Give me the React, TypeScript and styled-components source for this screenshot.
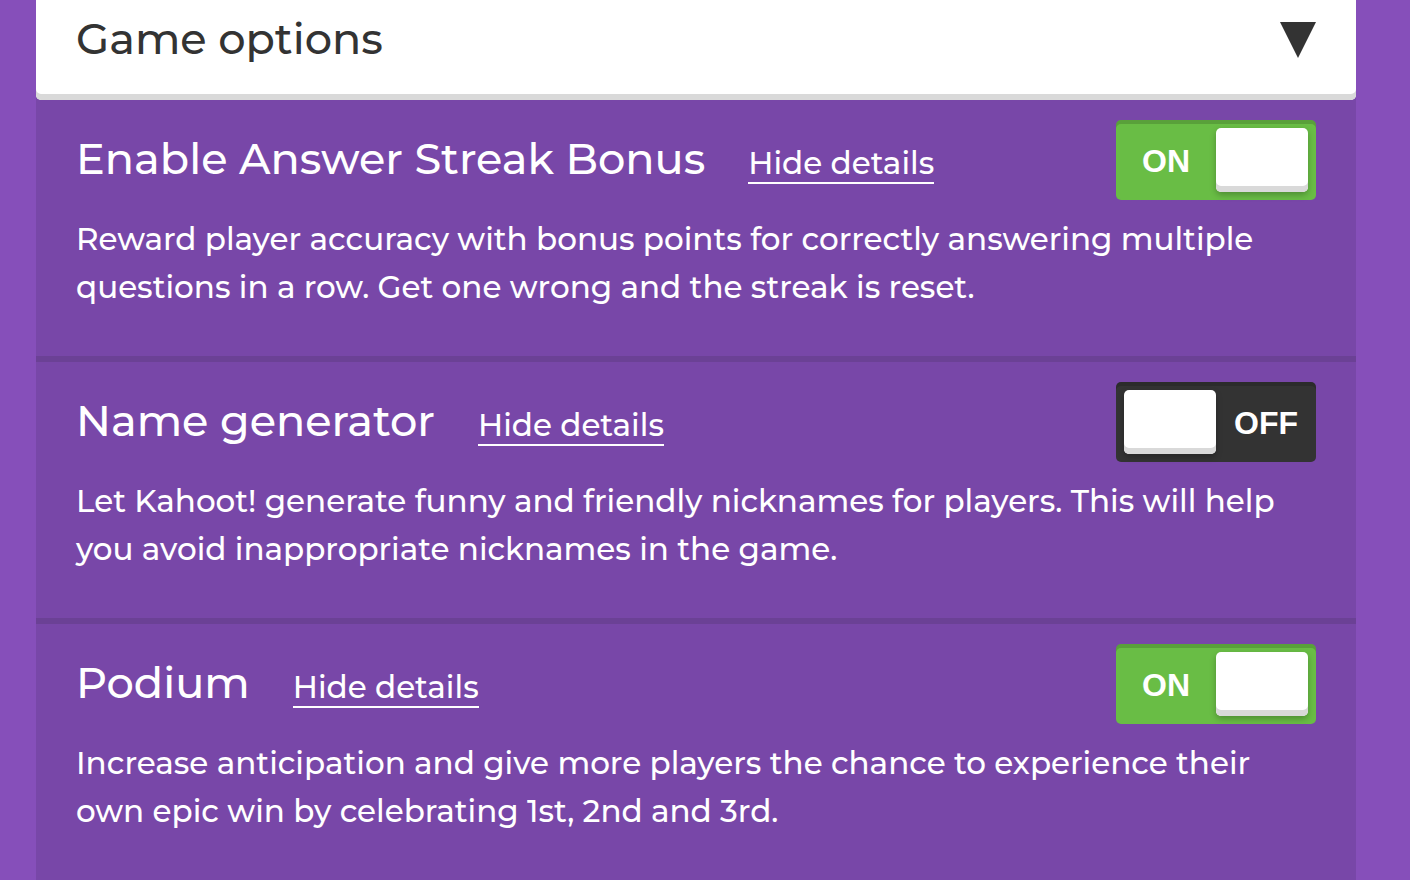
import React, { useState } from "react";
import styled, { createGlobalStyle } from "styled-components";

const GlobalStyle = createGlobalStyle`
  *, *::before, *::after {
    box-sizing: border-box;
  }

  body {
    margin: 0;
    background: #864fba;
    color: #fff;
    font-family: Montserrat, Inter, sans-serif;
    font-weight: 500;
  }
`;

const Page = styled.main`
  display: flex;
  flex-direction: column;
  min-height: 100vh;
  padding: 0 54px 0 36px;
`;

const Panel = styled.section`
  display: flex;
  flex: 1;
  flex-direction: column;
  background: #7847a8;
`;

const PanelHeader = styled.button`
  display: flex;
  align-items: flex-start;
  justify-content: space-between;
  width: 100%;
  padding: 15px 40px 37px;
  border: 0;
  border-radius: 0 0 5px 5px;
  background: #fff;
  box-shadow: inset 0 -6px 0 #d9d9d9;
  color: #333;
  font: inherit;
  font-size: 43px;
  line-height: 48px;
  text-align: left;
  cursor: pointer;
`;

const Arrow = styled.svg<{ $open: boolean }>`
  width: 36px;
  height: 36px;
  margin-top: 7px;
  fill: #333;
  transform: ${({ $open }) => ($open ? "none" : "rotate(-90deg)")};
`;

const Option = styled.article`
  padding: 20px 40px 45px;

  & + & {
    border-top: 6px solid #6b4195;
  }
`;

const OptionTop = styled.div`
  display: flex;
  align-items: flex-start;
  justify-content: space-between;
`;

const Heading = styled.div`
  display: flex;
  flex-wrap: wrap;
  align-items: baseline;
  gap: 0 43px;
  padding-top: 15px;
`;

const Title = styled.h2`
  margin: 0;
  font-size: 43px;
  font-weight: 500;
  line-height: 48px;
`;

const DetailsLink = styled.a`
  border-bottom: 2px solid #fff;
  color: #fff;
  font-size: 31px;
  line-height: 38px;
  text-decoration: none;
`;

const Description = styled.p`
  margin: 15px 0 0;
  font-size: 31px;
  line-height: 48px;
`;

const Track = styled.label<{ $on: boolean }>`
  display: flex;
  flex: none;
  flex-direction: ${({ $on }) => ($on ? "row" : "row-reverse")};
  align-items: center;
  width: 200px;
  height: 80px;
  border-radius: 5px;
  background: ${({ $on }) => ($on ? "#69bd45" : "#333")};
  box-shadow: inset 0 4px 0 rgba(0, 0, 0, 0.15);
  cursor: pointer;
`;

const StateText = styled.span`
  flex: 1;
  padding-top: 2px;
  font-family: "Liberation Sans", Arial, sans-serif;
  font-size: 32px;
  font-weight: 700;
  line-height: 40px;
  text-align: center;
`;

const Knob = styled.input`
  appearance: none;
  width: 92px;
  height: 64px;
  margin: 0;
  border-radius: 5px;
  background: #fff;
  box-shadow: inset 0 -6px 0 #d9d9d9, 0 3px 6px rgba(0, 0, 0, 0.25);
  cursor: pointer;

  &:checked {
    margin-right: 8px;
  }

  &:not(:checked) {
    margin-left: 8px;
  }
`;

interface OptionData {
  id: string;
  title: string;
  description: string;
  enabled: boolean;
}

const options: OptionData[] = [
  {
    id: "streak",
    title: "Enable Answer Streak Bonus",
    description:
      "Reward player accuracy with bonus points for correctly answering multiple questions in a row. Get one wrong and the streak is reset.",
    enabled: true,
  },
  {
    id: "names",
    title: "Name generator",
    description:
      "Let Kahoot! generate funny and friendly nicknames for players. This will help you avoid inappropriate nicknames in the game.",
    enabled: false,
  },
  {
    id: "podium",
    title: "Podium",
    description:
      "Increase anticipation and give more players the chance to experience their own epic win by celebrating 1st, 2nd and 3rd.",
    enabled: true,
  },
];

function GameOption({ id, title, description, enabled }: OptionData) {
  const [on, setOn] = useState(enabled);
  const [details, setDetails] = useState(true);

  return (
    <Option id={id}>
      <OptionTop>
        <Heading>
          <Title>{title}</Title>
          <DetailsLink
            href={`#${id}`}
            onClick={(event) => {
              event.preventDefault();
              setDetails(!details);
            }}
          >
            {details ? "Hide details" : "Show details"}
          </DetailsLink>
        </Heading>
        <Track $on={on}>
          <StateText>{on ? "ON" : "OFF"}</StateText>
          <Knob
            type="checkbox"
            role="switch"
            aria-label={title}
            checked={on}
            onChange={() => setOn(!on)}
          />
        </Track>
      </OptionTop>
      {details && <Description>{description}</Description>}
    </Option>
  );
}

export default function App() {
  const [open, setOpen] = useState(true);

  return (
    <>
      <GlobalStyle />
      <Page>
        <Panel>
          <PanelHeader type="button" aria-expanded={open} onClick={() => setOpen(!open)}>
            Game options
            <Arrow $open={open} viewBox="0 0 36 36" aria-hidden="true">
              <path d="M0 0h36L18 36z" />
            </Arrow>
          </PanelHeader>
          {open && options.map((option) => <GameOption key={option.id} {...option} />)}
        </Panel>
      </Page>
    </>
  );
}
